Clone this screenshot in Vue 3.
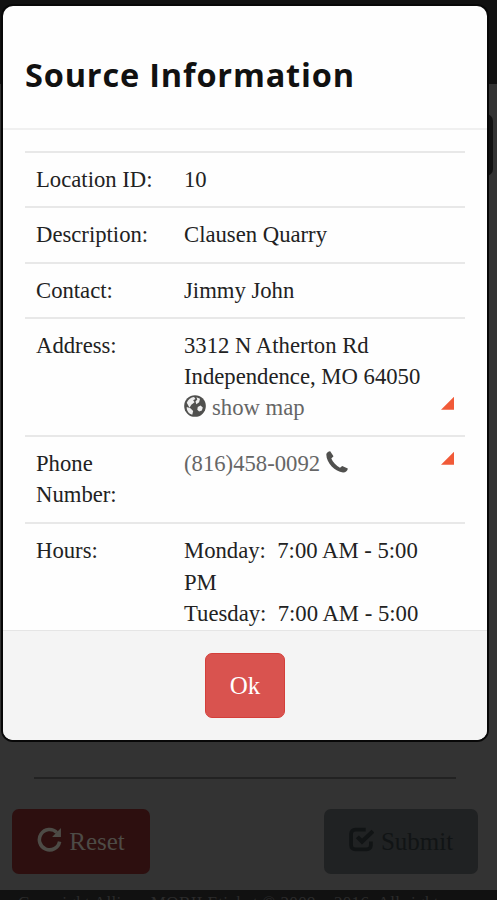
<template>
  <div class="page">
    <header class="topbar"></header>
    <main class="form-area">
      <div class="field-edge"></div>
      <hr class="divider" />
      <div class="actions">
        <button type="button" class="btn btn-reset">
          <svg class="btn-icon" viewBox="0 0 24 24" fill="none" aria-hidden="true">
            <path d="M19 5.200A9.800 9.800 0 1 0 21.700 14" stroke="currentColor" stroke-width="3.400" />
            <path d="M23 1v8.500H14.500z" fill="currentColor" />
          </svg>
          <span>Reset</span>
        </button>
        <button type="button" class="btn btn-submit">
          <svg class="btn-icon" viewBox="0 0 24 24" fill="none" aria-hidden="true">
            <path d="M16 2.500H6A4 4 0 0 0 2 6.500v11a4 4 0 0 0 4 4h11a4 4 0 0 0 4-4V14" stroke="currentColor" stroke-width="3.600" />
            <path d="M8 9.500l4.500 4.500L23 4" stroke="currentColor" stroke-width="4" />
          </svg>
          <span>Submit</span>
        </button>
      </div>
    </main>
    <footer class="site-footer">Copyright Allison MOBILEticket © 2009 – 2016. All rights</footer>

    <section class="modal" role="dialog" aria-labelledby="modal-title">
      <header class="modal-header">
        <h3 id="modal-title">Source Information</h3>
      </header>
      <div class="modal-body">
        <dl class="info">
          <div v-for="row in rows" :key="row.label" class="info-row" :class="{ tall: row.phone }">
            <dt>{{ row.label }}</dt>
            <dd>
              <div v-for="line in row.lines" :key="line">{{ line }}</div>
              <a v-if="row.map" class="link">
                <svg class="globe" viewBox="0 0 24 24" aria-hidden="true">
                  <circle cx="12" cy="12" r="11.800" fill="#50504e" />
                  <path d="M3 8.500C4.500 5 7.500 2.700 11 2.300l1.500 2-2.500 1.500 1.500 2-3.500 2.700-2 3.500zM13.500 2.500l4 1.500-1 4-3 2-1-3 2-2zM3 13l4 1.500 3 3-1 4C5.500 20.500 2.500 17 3 13zM15 13l3-1.500 2.500 2-1 3.500-3 1-2-2z" fill="#eee" />
                </svg>
                <span>show map</span>
              </a>
              <a v-if="row.phone" class="link">
                <span>{{ row.phone }}</span>
                <svg class="phone" viewBox="0 0 22 22" aria-hidden="true">
                  <path d="M.3 3.500C.4 1.800 2.700.2 4.200.3l3.300 5-2.200 2.200c1.600 3.600 5 7.400 8.700 9.200l2.200-1.700 5.600 2.400c0 2.200-2.200 4.100-4.800 4C9.200 21 .4 11.800.3 3.500z" fill="#50504e" />
                </svg>
              </a>
              <i v-if="row.map || row.phone" class="corner" :class="{ low: row.map }"></i>
            </dd>
          </div>
        </dl>
      </div>
      <footer class="modal-footer">
        <button type="button" class="btn btn-ok">Ok</button>
      </footer>
    </section>
  </div>
</template>

<script setup>
const rows = [
  { label: "Location ID:", lines: ["10"] },
  { label: "Description:", lines: ["Clausen Quarry"] },
  { label: "Contact:", lines: ["Jimmy John"] },
  { label: "Address:", lines: ["3312 N Atherton Rd", "Independence, MO 64050"], map: true },
  { label: "Phone Number:", lines: [], phone: "(816)458-0092" },
  { label: "Hours:", lines: ["Monday: \u00a07:00 AM - 5:00 PM", "Tuesday: \u00a07:00 AM - 5:00"] },
];
</script>

<style>
body { margin: 0; background: #333; }
</style>

<style scoped>
.page { position: relative; display: flex; flex-direction: column; height: 900px; overflow: hidden; background: #333; color: #222; font-family: "Liberation Serif", "Times New Roman", serif; font-size: 22.7px; line-height: 31.3px; }
.page * { box-sizing: border-box; }
.topbar { flex: none; height: 84px; background: #111; }
.form-area { position: relative; display: flex; flex: 1; flex-direction: column; justify-content: flex-end; }
.field-edge { position: absolute; top: 30px; right: 4px; width: 30px; height: 62px; border-radius: 7px; background: #111; }
.divider { width: 422px; height: 2px; margin: 0 0 30px 34px; border: 0; background: #222; }
.actions { display: flex; justify-content: space-between; padding: 0 19px 16px 12px; }
.btn { display: flex; align-items: center; justify-content: center; gap: 7px; height: 65px; padding: 0; border: 1px solid transparent; border-radius: 7px; font: inherit; font-size: 25px; }
.btn-reset { width: 138px; background: #2d0f0f; color: #4d4b46; }
.btn-submit { width: 154px; background: #202223; color: #111415; }
.btn-icon { width: 25px; height: 25px; margin-top: -5px; }
.site-footer { flex: none; height: 10px; padding-left: 18px; overflow: hidden; background: #111; color: #2b2b2b; font-size: 17px; line-height: 25px; letter-spacing: 0.35px; white-space: nowrap; }

.modal { position: absolute; top: 6px; left: 3px; display: flex; flex-direction: column; width: 484px; height: 734px; overflow: hidden; border-radius: 10px; background: #fefefe; box-shadow: 0 0 0 2px #080808; }
.modal-header { flex: none; height: 124px; padding: 49px 22px 0; border-bottom: 2px solid #f0f0f0; }
.modal-header h3 { margin: 0; color: #111; font: 700 32.5px/40px "Open Sans", sans-serif; letter-spacing: 0.82px; white-space: nowrap; }
.modal-body { flex: 1; min-height: 0; padding: 21px 22px 0; overflow: hidden; }
.info { margin: 0; }
.info-row { display: flex; padding: 11px; border-top: 2px solid #e8e8e8; }
.info-row.tall { padding-bottom: 12px; }
.info-row dt { flex: none; width: 148px; padding-right: 22px; }
.info-row dd { position: relative; flex: 1; min-width: 0; margin: 0; }
.link { display: flex; align-items: center; gap: 6px; color: #666; }
.globe { width: 22px; height: 22px; margin-top: -5px; }
.phone { width: 22px; height: 22px; margin-top: -3px; }
.corner { position: absolute; top: 4px; right: 0; width: 13px; height: 13px; background: #f15a38; clip-path: polygon(100% 0, 100% 100%, 0 100%); }
.corner.low { top: auto; bottom: 14px; }
.modal-footer { display: flex; flex: none; align-items: flex-start; justify-content: center; height: 110px; padding-top: 22px; border-top: 1px solid #e5e5e5; background: #f4f4f4; }
.btn-ok { width: 80px; border-color: #d43f3a; background: #d9534f; color: #fff; }
</style>
